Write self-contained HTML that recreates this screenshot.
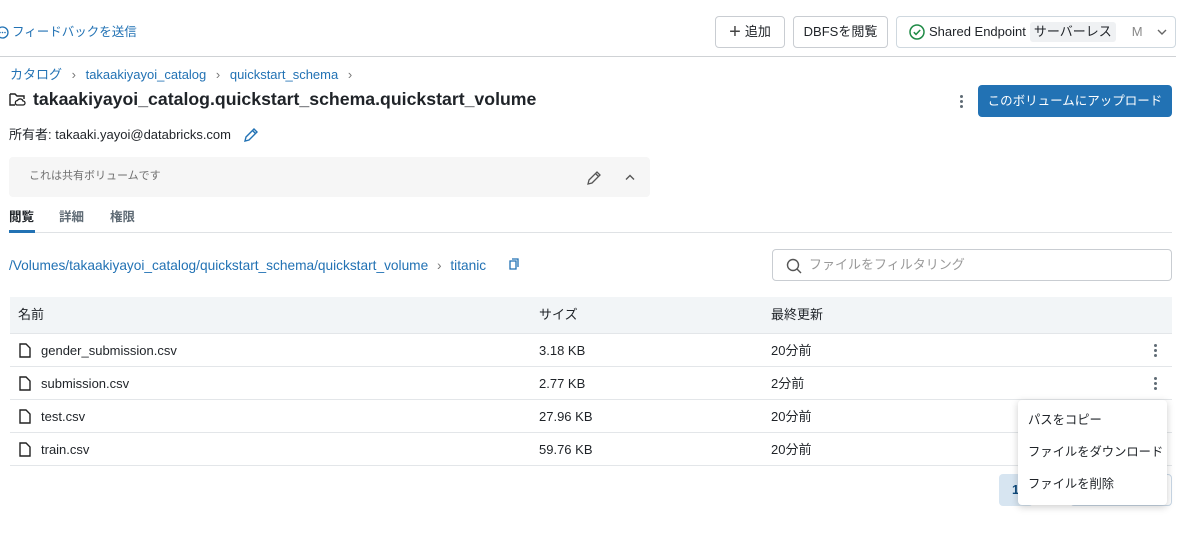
<!DOCTYPE html><html><head><meta charset="utf-8"><style>
*{box-sizing:border-box;margin:0;padding:0}
body{width:1184px;height:548px;background:#fff;font-family:"Liberation Sans","Noto Sans CJK JP",sans-serif;color:#1f2328;position:relative;overflow:hidden;font-size:13px;line-height:16px}
.a{position:absolute;white-space:nowrap;line-height:16px}
.blue{color:#2272b4}
.btn{position:absolute;border:1px solid #c9cdd2;border-radius:4px;height:32px;top:16px;display:flex;align-items:center;justify-content:center;font-size:13px;line-height:16px}
.row{position:absolute;left:10px;width:1162px;height:33px;border-bottom:1px solid #e3e6e9;font-size:13px}
.row span{position:absolute;top:9px;line-height:16px}
.dots{position:absolute;width:3px}
.dots i{display:block;width:3px;height:3px;border-radius:50%;background:#5f6b75;margin-bottom:2px}
</style></head><body>
<div class="a blue" style="left:-4px;top:24px;font-size:12.5px;display:flex;align-items:center"><svg width="13" height="13" viewBox="0 0 13 13" style="margin-right:3px"><circle cx="6.5" cy="6.5" r="5.5" fill="none" stroke="#2272b4" stroke-width="1.3"/><circle cx="4" cy="6.5" r=".8" fill="#2272b4"/><circle cx="6.5" cy="6.5" r=".8" fill="#2272b4"/><circle cx="9" cy="6.5" r=".8" fill="#2272b4"/></svg>フィードバックを送信</div>
<div class="btn" style="left:715px;width:70px"><span style="font-size:20px;font-weight:200;margin-right:4px;color:#444">+</span>追加</div>
<div class="btn" style="left:793px;width:95px">DBFSを閲覧</div>
<div class="btn" style="left:896px;width:280px;justify-content:flex-start;padding-left:12px;border-color:#cfd8df"><svg width="16" height="16" viewBox="0 0 16 16"><circle cx="8" cy="8" r="7" fill="none" stroke="#1e8a45" stroke-width="1.5"/><path d="M4.8 8.2l2.2 2.2 4.2-4.4" fill="none" stroke="#1e8a45" stroke-width="1.5"/></svg><span style="margin-left:4px">Shared Endpoint</span><span style="margin-left:4px;background:#eff1f3;padding:2px 4px;border-radius:3px">サーバーレス</span><span style="margin-left:16px;color:#888">M</span><svg style="margin-left:14px" width="10" height="6" viewBox="0 0 10 6"><path d="M1 1l4 4 4-4" fill="none" stroke="#666" stroke-width="1.4"/></svg></div>
<div class="a" style="left:0;top:56px;width:1176px;height:1px;background:#cfd2d5"></div>
<div class="a blue" style="left:10px;top:67px">カタログ <span style="color:#777;margin:0 6px">›</span> takaakiyayoi_catalog <span style="color:#777;margin:0 6px">›</span> quickstart_schema <span style="color:#777;margin:0 6px">›</span></div>
<svg class="a" style="left:9px;top:92px" width="17" height="15" viewBox="0 0 17 15"><path d="M1 2h5l2 2h7v3M1 2v11h5" fill="none" stroke="#222" stroke-width="1.4"/><path d="M8 13h6a2 2 0 0 0 0-4 3 3 0 0 0-5.5-.5A2.3 2.3 0 0 0 8 13z" fill="none" stroke="#222" stroke-width="1.3"/></svg>
<div class="a" style="left:33px;top:89px;font-size:17.7px;line-height:20px;font-weight:bold">takaakiyayoi_catalog.quickstart_schema.quickstart_volume</div>
<div class="dots" style="left:960px;top:95px"><i></i><i></i><i></i></div>
<div class="a" style="left:978px;top:85px;width:194px;height:32px;background:#2272b4;border-radius:4px;color:#fff;display:flex;align-items:center;justify-content:center;font-size:12.5px">このボリュームにアップロード</div>
<div class="a" style="left:9px;top:127px">所有者: takaaki.yayoi@databricks.com</div>
<svg class="a" style="left:243px;top:127px" width="16" height="16" viewBox="0 0 16 16"><path d="M2 14l1-4 8-8 3 3-8 8zM9.5 3.5l3 3" fill="none" stroke="#2272b4" stroke-width="1.4"/></svg>
<div class="a" style="left:9px;top:157px;width:641px;height:40px;background:#f6f6f6;border-radius:4px"></div>
<div class="a" style="left:29px;top:168px;font-size:11px;color:#6f6f6f">これは共有ボリュームです</div>
<svg class="a" style="left:586px;top:170px" width="16" height="16" viewBox="0 0 16 16"><path d="M2 14l1-4 8-8 3 3-8 8zM9.5 3.5l3 3" fill="none" stroke="#555" stroke-width="1.3"/></svg>
<svg class="a" style="left:625px;top:174px" width="10" height="7" viewBox="0 0 10 7"><path d="M1 5.5l4-4 4 4" fill="none" stroke="#555" stroke-width="1.4"/></svg>
<div class="a" style="left:9px;top:209px;font-weight:bold;font-size:12.5px">閲覧</div>
<div class="a" style="left:59px;top:209px;font-weight:bold;font-size:12.5px;color:#5f6b75">詳細</div>
<div class="a" style="left:110px;top:209px;font-weight:bold;font-size:12.5px;color:#5f6b75">権限</div>
<div class="a" style="left:9px;top:232px;width:1163px;height:1px;background:#dfe2e5"></div>
<div class="a" style="left:9px;top:230px;width:26px;height:3px;background:#2272b4"></div>
<div class="a blue" style="left:9px;top:258px;font-size:13.7px">/Volumes/takaakiyayoi_catalog/quickstart_schema/quickstart_volume <span style="color:#777;margin:0 5px">›</span> titanic</div>
<svg class="a" style="left:509px;top:258px" width="10" height="12" viewBox="0 0 10 12"><path d="M3 1h6v8M1 3h6v8H1z" fill="none" stroke="#2272b4" stroke-width="1.3"/></svg>
<div class="a" style="left:772px;top:249px;width:400px;height:32px;border:1px solid #c9cdd2;border-radius:4px"></div>
<svg class="a" style="left:786px;top:258px" width="16" height="16" viewBox="0 0 16 16"><circle cx="7" cy="7" r="5.5" fill="none" stroke="#555" stroke-width="1.4"/><path d="M11 11l4 4" stroke="#555" stroke-width="1.4"/></svg>
<div class="a" style="left:809px;top:257px;color:#999">ファイルをフィルタリング</div>
<div class="row" style="top:297px;height:37px;background:#f2f5f7"><span style="left:8px;top:10px">名前</span><span style="left:529px;top:10px">サイズ</span><span style="left:761px;top:10px">最終更新</span></div>
<div class="row" style="top:334px"><span style="left:31px">gender_submission.csv</span><span style="left:529px">3.18 KB</span><span style="left:761px">20分前</span></div>
<div class="row" style="top:367px"><span style="left:31px">submission.csv</span><span style="left:529px">2.77 KB</span><span style="left:761px">2分前</span></div>
<div class="row" style="top:400px"><span style="left:31px">test.csv</span><span style="left:529px">27.96 KB</span><span style="left:761px">20分前</span></div>
<div class="row" style="top:433px"><span style="left:31px">train.csv</span><span style="left:529px">59.76 KB</span><span style="left:761px">20分前</span></div>
<svg class="a" style="left:19px;top:343px" width="12" height="15" viewBox="0 0 12 15"><path d="M1 1h6l4 4v9H1z" fill="none" stroke="#222" stroke-width="1.4"/></svg>
<svg class="a" style="left:19px;top:376px" width="12" height="15" viewBox="0 0 12 15"><path d="M1 1h6l4 4v9H1z" fill="none" stroke="#222" stroke-width="1.4"/></svg>
<svg class="a" style="left:19px;top:409px" width="12" height="15" viewBox="0 0 12 15"><path d="M1 1h6l4 4v9H1z" fill="none" stroke="#222" stroke-width="1.4"/></svg>
<svg class="a" style="left:19px;top:442px" width="12" height="15" viewBox="0 0 12 15"><path d="M1 1h6l4 4v9H1z" fill="none" stroke="#222" stroke-width="1.4"/></svg>
<div class="dots" style="left:1154px;top:344px"><i></i><i></i><i></i></div>
<div class="dots" style="left:1154px;top:377px"><i></i><i></i><i></i></div>
<div class="a" style="left:999px;top:474px;width:34px;height:32px;background:#d7e5f1;border-radius:4px;color:#0e4a7c;font-weight:bold;padding:8px 0 0 13px">1</div>
<div class="a" style="left:1070px;top:474px;width:102px;height:32px;border:1px solid #c9d8e6;border-radius:4px"></div>
<div class="a" style="left:1018px;top:400px;width:149px;height:105px;background:#fff;border-radius:4px;box-shadow:0 2px 8px rgba(0,0,0,.2);font-size:12.3px">
<div class="a" style="left:10px;top:12px">パスをコピー</div>
<div class="a" style="left:10px;top:44px">ファイルをダウンロード</div>
<div class="a" style="left:10px;top:76px">ファイルを削除</div></div>
</body></html>
